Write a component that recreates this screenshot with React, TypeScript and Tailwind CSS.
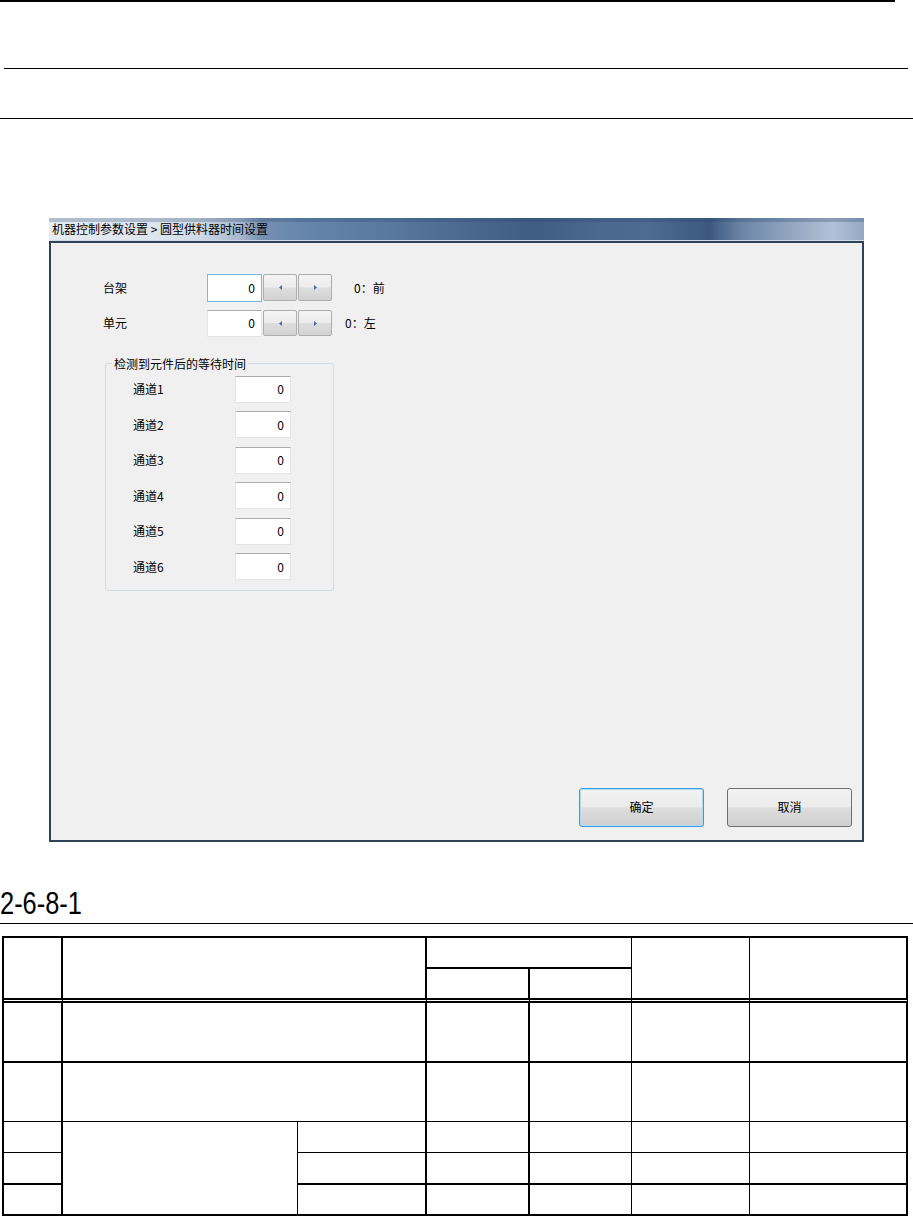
import type { ReactNode } from 'react'

const cjk = "font-['Noto_Sans_CJK_SC','Microsoft_YaHei',sans-serif]"

function SpinButton({ dir }: { dir: 'left' | 'right' }) {
  return (
    <div className="w-[34px] h-full border border-[#adadad] rounded-[2px] bg-[linear-gradient(#f4f4f4_0%,#ececec_48%,#dddddd_52%,#d2d2d2_100%)] flex items-center justify-center">
      <svg width="3" height="5" viewBox="0 0 3 5">
        {dir === 'left' ? (
          <path d="M3 0 L0 2.5 L3 5 Z" fill="#4f6b9c" />
        ) : (
          <path d="M0 0 L3 2.5 L0 5 Z" fill="#4f6b9c" />
        )}
      </svg>
    </div>
  )
}

function TextBox({ value, focused, className }: { value: string; focused?: boolean; className: string }) {
  return (
    <div
      className={`${className} bg-white border flex items-center justify-end pr-[6px] text-[12px] text-black ${
        focused ? 'border-[#7eb4ea]' : 'border-[#e2e5ea] border-t-[#abadb3]'
      }`}
    >
      {value}
    </div>
  )
}

function DialogButton({ children, focused }: { children: ReactNode; focused?: boolean }) {
  return (
    <div
      className={`w-[125px] h-[39px] rounded-[3px] border flex items-center justify-center text-[12px] text-black bg-[linear-gradient(#f2f2f2_0%,#ebebeb_48%,#dddddd_52%,#cfcfcf_100%)] ${
        focused ? 'border-[#3c9be0] shadow-[inset_0_0_0_1px_#a8dcf7]' : 'border-[#707070]'
      }`}
    >
      {children}
    </div>
  )
}

const channels = ['通道1', '通道2', '通道3', '通道4', '通道5', '通道6']

function Dialog() {
  return (
    <div className={`ml-[49px] w-[815px] ${cjk}`}>
      {/* title bar */}
      <div className="h-[23px] flex items-center pl-[3px] text-[12px] text-black border-b border-[#d3dde8] bg-[linear-gradient(180deg,rgba(40,70,110,0.28)_0px,rgba(40,70,110,0.28)_4px,transparent_4px),linear-gradient(90deg,#e6ecf3_0px,#dce4ee_110px,#cfdae6_151px,#a7b8cd_191px,#7690b2_213px,#6786ad_251px,#5b7aa2_331px,#4d6b93_401px,#3e5c84_484px,#4a6890_551px,#4d6a91_601px,#3a5880_661px,#6a82a4_690px,#8a9fbc_731px,#b2c1d5_784px,#94a8c4_815px)]">
        机器控制参数设置 &gt; 圆型供料器时间设置
      </div>
      {/* client area */}
      <div className="h-[601px] bg-[#f0f0f0] border-2 border-[#2f4258] flex flex-col pt-[31px] pl-[52px] text-[12px] text-black">
        <div className="flex items-center h-[28px]">
          <span className="w-[104px]">台架</span>
          <TextBox value="0" focused className="w-[55px] h-full" />
          <div className="flex h-[27px] gap-[1px] ml-[1px]">
            <SpinButton dir="left" />
            <SpinButton dir="right" />
          </div>
          <span className="ml-[22px]">0：前</span>
        </div>
        <div className="flex items-center h-[27px] mt-[8px]">
          <span className="w-[104px]">单元</span>
          <TextBox value="0" className="w-[55px] h-full" />
          <div className="flex h-[26px] gap-[1px] ml-[1px]">
            <SpinButton dir="left" />
            <SpinButton dir="right" />
          </div>
          <span className="ml-[13px]">0：左</span>
        </div>

        <div className="relative ml-[2px] mt-[26px] w-[229px] h-[228px] border border-[#d5dde4] rounded-[3px] pt-[12px] pl-[27px] flex flex-col gap-[8.6px]">
          <span className="absolute left-[6px] -top-[9px] px-[2px] bg-[#f0f0f0] leading-[17px]">检测到元件后的等待时间</span>
          {channels.map(name => (
            <div key={name} className="flex items-center h-[27px]">
              <span className="w-[102px]">{name}</span>
              <TextBox value="0" className="w-[56px] h-full" />
            </div>
          ))}
        </div>

        <div className="mt-auto flex justify-end gap-[23px] pr-[10px] pb-[13px]">
          <DialogButton focused>确定</DialogButton>
          <DialogButton>取消</DialogButton>
        </div>
      </div>
    </div>
  )
}

function SpecTable() {
  const c = 'p-0 border-black'
  return (
    <table className="ml-[2px] w-[906px] table-fixed border-separate border-spacing-0 border-l-2 border-t-2 border-black">
      <colgroup>
        <col className="w-[59px]" />
        <col className="w-[235px]" />
        <col className="w-[129px]" />
        <col className="w-[103px]" />
        <col className="w-[102px]" />
        <col className="w-[118px]" />
        <col className="w-[158px]" />
      </colgroup>
      <tbody>
        <tr className="h-[31px]">
          <td rowSpan={2} className={`${c} border-r-2 border-b-[5px] border-double`} />
          <td rowSpan={2} colSpan={2} className={`${c} border-r-2 border-b-[5px] border-double`} />
          <td colSpan={2} className={`${c} border-r border-b-2`} />
          <td rowSpan={2} className={`${c} border-r border-b-[5px] border-double`} />
          <td rowSpan={2} className={`${c} border-r-2 border-b-[5px] border-double`} />
        </tr>
        <tr className="h-[34px]">
          <td className={`${c} border-r-2 border-b-[5px] border-double`} />
          <td className={`${c} border-r border-b-[5px] border-double`} />
        </tr>
        <tr className="h-[60px]">
          <td className={`${c} border-r-2 border-b-2`} />
          <td colSpan={2} className={`${c} border-r-2 border-b-2`} />
          <td className={`${c} border-r-2 border-b-2`} />
          <td className={`${c} border-r border-b-2`} />
          <td className={`${c} border-r border-b-2`} />
          <td className={`${c} border-r-2 border-b-2`} />
        </tr>
        <tr className="h-[59px]">
          <td className={`${c} border-r-2 border-b`} />
          <td colSpan={2} className={`${c} border-r-2 border-b`} />
          <td className={`${c} border-r-2 border-b`} />
          <td className={`${c} border-r border-b`} />
          <td className={`${c} border-r border-b`} />
          <td className={`${c} border-r-2 border-b`} />
        </tr>
        <tr className="h-[31px]">
          <td className={`${c} border-r-2 border-b`} />
          <td rowSpan={3} className={`${c} border-r border-b-2`} />
          <td className={`${c} border-r-2 border-b`} />
          <td className={`${c} border-r-2 border-b`} />
          <td className={`${c} border-r border-b`} />
          <td className={`${c} border-r border-b`} />
          <td className={`${c} border-r-2 border-b`} />
        </tr>
        <tr className="h-[32px]">
          <td className={`${c} border-r-2 border-b-2`} />
          <td className={`${c} border-r-2 border-b-2`} />
          <td className={`${c} border-r-2 border-b-2`} />
          <td className={`${c} border-r border-b-2`} />
          <td className={`${c} border-r border-b-2`} />
          <td className={`${c} border-r-2 border-b-2`} />
        </tr>
        <tr className="h-[31px]">
          <td className={`${c} border-r-2 border-b-2`} />
          <td className={`${c} border-r-2 border-b-2`} />
          <td className={`${c} border-r-2 border-b-2`} />
          <td className={`${c} border-r border-b-2`} />
          <td className={`${c} border-r border-b-2`} />
          <td className={`${c} border-r-2 border-b-2`} />
        </tr>
      </tbody>
    </table>
  )
}

export default function App() {
  return (
    <div className="w-[913px] h-[1216px] bg-white overflow-hidden">
      <div className="h-[1.5px] w-[895px] bg-black" />
      <div className="h-[1.5px] w-[904px] ml-[4px] mt-[66px] bg-black" />
      <div className="h-[1.5px] w-[913px] mt-[48.5px] bg-black" />
      <div className="mt-[98.5px]">
        <Dialog />
      </div>
      <div className="mt-[46px] h-[32px] flex items-center">
        <span className="inline-block origin-left scale-x-[0.82] text-[31px] leading-none text-black font-['Liberation_Sans',Arial,sans-serif]">
          2-6-8-1
        </span>
      </div>
      <div className="h-[1.5px] w-[913px] mt-[3px] bg-black" />
      <div className="mt-[12px]">
        <SpecTable />
      </div>
    </div>
  )
}
